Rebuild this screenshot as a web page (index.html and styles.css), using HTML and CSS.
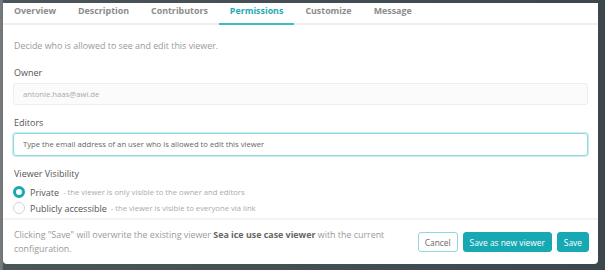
FILE: index.html
```html
<!DOCTYPE html>
<html lang="en">
<head>
  <meta charset="UTF-8">
  <meta name="viewport" content="width=device-width, initial-scale=1.0">
  <title>Permissions</title>
  <link rel="stylesheet" href="styles.css">
</head>
<body>
  <div class="modal">
    <nav class="tabs">
      <div class="tab">Overview</div>
      <div class="tab">Description</div>
      <div class="tab">Contributors</div>
      <div class="tab active">Permissions</div>
      <div class="tab">Customize</div>
      <div class="tab">Message</div>
    </nav>
    <div class="content">
      <p class="intro">Decide who is allowed to see and edit this viewer.</p>
      <label class="label">Owner</label>
      <div class="input readonly">antonie.haas@awi.de</div>
      <label class="label">Editors</label>
      <div class="input focused">Type the email address of an user who is allowed to edit this viewer</div>
      <label class="label">Viewer Visibility</label>
      <div class="radio-row">
        <span class="radio checked"></span>
        <span class="opt">Private</span>
        <span class="hint">- the viewer is only visible to the owner and editors</span>
      </div>
      <div class="radio-row">
        <span class="radio"></span>
        <span class="opt">Publicly accessible</span>
        <span class="hint">- the viewer is visible to everyone via link</span>
      </div>
    </div>
    <div class="footer">
      <p class="note">Clicking "Save" will overwrite the existing viewer <b>Sea ice use case viewer</b> with the current configuration.</p>
      <div class="actions">
        <button class="btn outline">Cancel</button>
        <button class="btn">Save as new viewer</button>
        <button class="btn">Save</button>
      </div>
    </div>
  </div>
</body>
</html>
```

FILE: styles.css
```css
html, body {
  margin: 0;
  height: 100%;
}
body {
  padding: 3px 7px 6px 3px;
  box-sizing: border-box;
  background: linear-gradient(90deg, #7a7d80 0, #6f7376 3px, #4b555a 3px, #3c474d 100%);
  font-family: "Open Sans", "Liberation Sans", sans-serif;
  font-size: 8.9px;
  color: #555;
}
.modal {
  height: 261px;
  background-color: #fff;
  border-radius: 0 0 4px 4px;
  display: flex;
  flex-direction: column;
}
.tabs {
  display: flex;
  height: 20px;
  border-bottom: 2px solid #eeeeee;
}
.tab {
  padding: 0 11px;
  height: 20px;
  line-height: 15px;
  font-size: 8.9px;
  font-weight: 700;
  color: #8c8c8c;
  border-bottom: 2px solid transparent;
}
.tab.active {
  color: #1eaab5;
  border-bottom-color: #3ebcc4;
}
.content {
  flex: 1;
  padding: 14px 10px 0;
  display: flex;
  flex-direction: column;
}
.intro {
  margin: 0 0 0 1px;
  line-height: 14px;
  color: #999;
}
.label {
  display: block;
  margin: 13px 0 3px 1px;
  line-height: 14px;
  font-size: 9px;
  color: #555;
}
.input {
  height: 22px;
  box-sizing: border-box;
  padding: 0 9px;
  line-height: 20px;
  border: 1px solid #eeeeee;
  border-radius: 3px;
  font-size: 7.7px;
}
.input.readonly {
  background-color: #fbfbfb;
  color: #aaa;
}
.input.focused {
  height: 23px;
  line-height: 21px;
  border-color: #8fd8dd;
  box-shadow: 0 0 0 1px #c8eef0;
  color: #666;
}
.content .label:nth-of-type(2),
.content .label:nth-of-type(3) {
  margin-top: 11px;
}
.radio-row {
  display: flex;
  align-items: center;
  height: 16px;
  gap: 4px;
}
.radio {
  width: 12px;
  height: 12px;
  box-sizing: border-box;
  border: 1px solid #d4d4d4;
  border-radius: 50%;
  margin-right: 1px;
}
.radio.checked {
  border: 3px solid #17a9b3;
}
.opt {
  font-size: 9px;
  color: #555;
}
.hint {
  font-size: 7.7px;
  color: #aaa;
}
.footer {
  height: 46px;
  box-sizing: border-box;
  border-top: 2px solid #f3f3f3;
  padding: 0 9px 0 11px;
  display: flex;
  align-items: center;
  gap: 24px;
}
.note {
  flex: 1;
  margin: 0;
  line-height: 14px;
  color: #999;
}
.note b {
  color: #666;
}
.actions {
  display: flex;
  gap: 5px;
}
.btn {
  height: 20px;
  padding: 0 6px;
  border: 1px solid #17a9b3;
  border-radius: 3px;
  background-color: #17a9b3;
  color: #fff;
  font-family: inherit;
  font-size: 8.4px;
}
.btn.outline {
  background-color: #fff;
  border-color: #8fd8dd;
  color: #666;
}
```
